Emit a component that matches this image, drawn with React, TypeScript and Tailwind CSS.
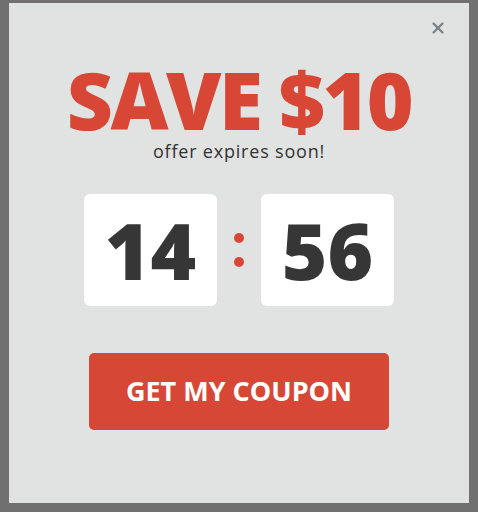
import { X } from "lucide-react";

const digitFont = { fontFamily: '"Open Sans", "Noto Sans", sans-serif' };

function TimeBox({ value }: { value: string }) {
  return (
    <div className="flex h-[112px] w-[133px] items-center justify-center rounded-[6px] bg-white">
      <span
        className="text-[78px] font-extrabold leading-none text-[#363636]"
        style={digitFont}
      >
        {value}
      </span>
    </div>
  );
}

export default function App() {
  return (
    <div className="h-[512px] w-[478px] overflow-hidden bg-[#707070] pl-[9px] pt-[3px]">
      <div className="relative flex h-[500px] w-[460px] flex-col items-center bg-[#e1e3e2]">
        <button className="absolute right-[22px] top-[16px] text-[#7b8087]">
          <X size={18} strokeWidth={3} />
        </button>

        <h1
          className="mt-[60px] text-[80px] font-extrabold leading-[72px] tracking-[-2.5px] text-[#d84736]"
          style={{ fontFamily: '"Open Sans", "Noto Sans", sans-serif' }}
        >
          SAVE $10
        </h1>
        <p
          className="mt-[6px] text-[18px] leading-[20px] tracking-[0.8px] text-[#333333]"
          style={{ fontFamily: '"Open Sans", "Noto Sans", sans-serif' }}
        >
          offer expires soon!
        </p>

        <div className="mt-[33px] flex items-center gap-[17px]">
          <TimeBox value="14" />
          <div className="flex flex-col gap-[14px]">
            <span className="h-[10px] w-[10px] rounded-full bg-[#d84736]" />
            <span className="h-[10px] w-[10px] rounded-full bg-[#d84736]" />
          </div>
          <TimeBox value="56" />
        </div>

        <button
          className="mt-[47px] flex h-[77px] w-[300px] items-center justify-center rounded-[5px] bg-[#d64736] text-[27px] font-bold text-white"
          style={{ fontFamily: '"Open Sans", "Noto Sans", sans-serif' }}
        >
          GET MY COUPON
        </button>
      </div>
    </div>
  );
}
